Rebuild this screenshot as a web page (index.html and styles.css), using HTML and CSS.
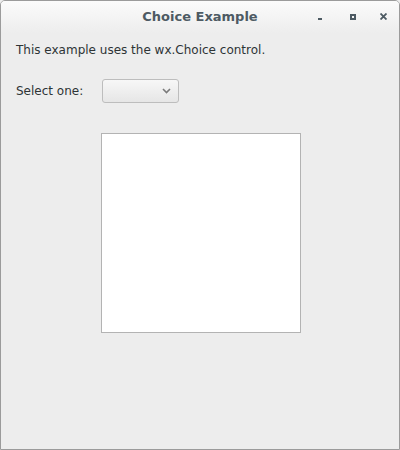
FILE: index.html
```html
<!DOCTYPE html>
<html>
<head>
<meta charset="utf-8">
<link rel="stylesheet" href="styles.css">
</head>
<body>
<div class="window">
  <div class="titlebar">
    <div class="title">Choice Example</div>
    <div class="controls">
      <span class="btn min"></span>
      <span class="btn max"></span>
      <span class="btn close">
        <svg width="7" height="7" viewBox="0 0 7 7"><path d="M0.5 0.5 L6.5 6.5 M6.5 0.5 L0.5 6.5" stroke="#4d5a63" stroke-width="1.8"/></svg>
      </span>
    </div>
  </div>
  <div class="content">
    <p class="intro">This example uses the wx.Choice control.</p>
    <div class="row">
      <span class="label">Select one:</span>
      <div class="choice">
        <svg width="9" height="6" viewBox="0 0 9 6"><path d="M1 1 L4.5 4.5 L8 1" fill="none" stroke="#7a7a7a" stroke-width="1.6"/></svg>
      </div>
    </div>
    <div class="listbox"></div>
  </div>
</div>
</body>
</html>
```
FILE: styles.css
```css
html, body {
  margin: 0;
  padding: 0;
  background: #ededed;
}
.window {
  width: 400px;
  height: 450px;
  box-sizing: border-box;
  border: 1px solid #9b9b9b;
  border-radius: 5px 5px 0 0;
  background: #ededed;
  font-family: "DejaVu Sans", sans-serif;
  display: flex;
  flex-direction: column;
  overflow: hidden;
}
.titlebar {
  height: 32px;
  flex: none;
  background: linear-gradient(#fbfbfb, #ededed);
  position: relative;
  display: flex;
  align-items: center;
  justify-content: center;
}
.title {
  font-weight: bold;
  font-size: 13px;
  color: #4d5a63;
  margin-top: -1px;
}
.controls {
  position: absolute;
  right: 0;
  top: 0;
  height: 32px;
  display: flex;
  align-items: center;
}
.btn {
  width: 31px;
  height: 32px;
  display: flex;
  align-items: center;
  justify-content: center;
  position: relative;
}
.min::before {
  content: "";
  width: 4px;
  height: 2px;
  background: #4d5a63;
  margin-top: 3px;
  margin-right: 3px;
}
.max::before {
  content: "";
  width: 2px;
  height: 2px;
  border: 2px solid #4d5a63;
  margin-top: -1px;
}
.close svg {
  margin-top: -1px;
  margin-right: 1px;
}
.content {
  padding: 0 15px;
  color: #2e3436;
  font-size: 12px;
}
.intro {
  margin: 9px 0 0 0;
  line-height: 16px;
}
.row {
  display: flex;
  align-items: center;
  margin-top: 21px;
}
.label {
  width: 86px;
  line-height: 16px;
}
.choice {
  width: 77px;
  height: 24px;
  box-sizing: border-box;
  border: 1px solid #bdbdbd;
  border-radius: 3px;
  background: linear-gradient(#f7f7f7, #e6e6e6);
  display: flex;
  align-items: center;
  justify-content: flex-end;
  padding-right: 7px;
}
.listbox {
  width: 198px;
  height: 198px;
  border: 1px solid #b3b3b3;
  background: #fff;
  margin: 30px 0 0 85px;
}
```
